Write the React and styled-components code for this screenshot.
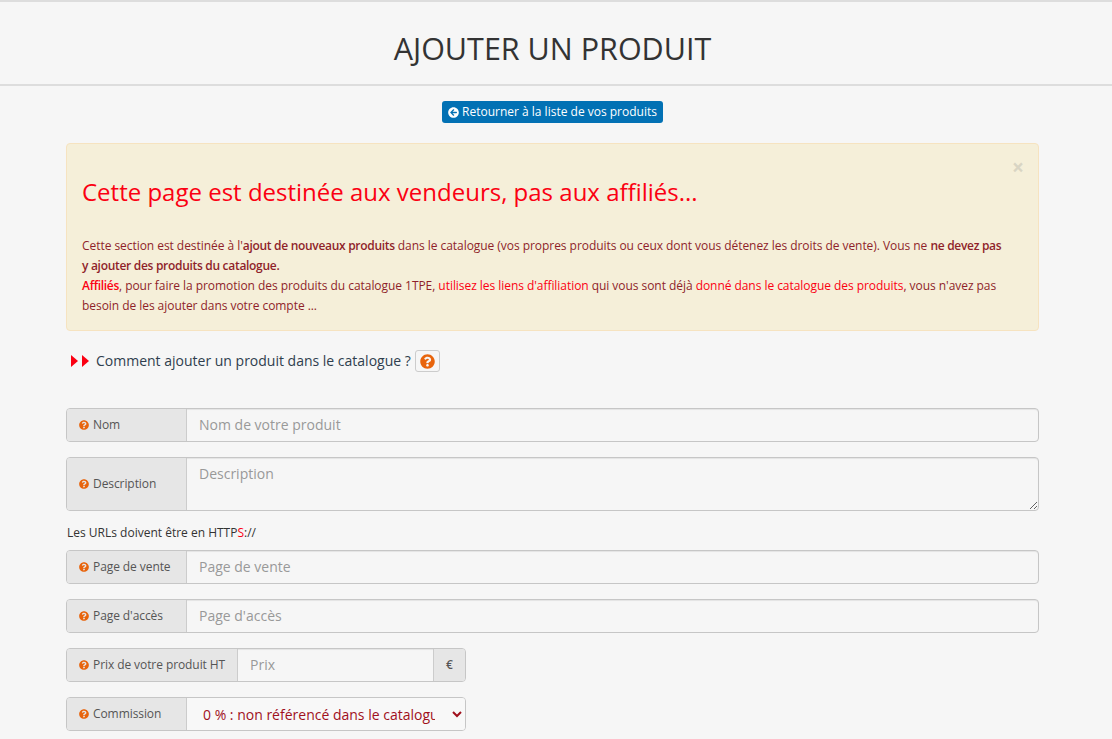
import React from 'react'
import styled, { createGlobalStyle } from 'styled-components'
import { FaQuestionCircle, FaArrowCircleLeft } from 'react-icons/fa'

const GlobalStyle = createGlobalStyle`
  html, body {
    margin: 0;
    padding: 0;
    background: #f6f6f6;
  }
  body {
    font-family: "Open Sans", "Liberation Sans", sans-serif;
    font-size: 12px;
    line-height: 20px;
    color: #333;
  }
  * {
    box-sizing: border-box;
  }
`

const App = () => {
  return (
    <>
      <GlobalStyle />
      <PageHeader>
        <PageTitle>AJOUTER UN PRODUIT</PageTitle>
      </PageHeader>
      <BackRow>
        <BackButton>
          <FaArrowCircleLeft size={11} />
          Retourner à la liste de vos produits
        </BackButton>
      </BackRow>
      <Content>
        <Alert>
          <CloseButton>×</CloseButton>
          <AlertTitle>Cette page est destinée aux vendeurs, pas aux affiliés...</AlertTitle>
          <AlertText>
            Cette section est destinée à l'<Strong>ajout de nouveaux produits</Strong> dans le catalogue
            (vos propres produits ou ceux dont vous détenez les droits de vente). Vous ne{' '}
            <Strong>ne devez pas y ajouter des produits du catalogue.</Strong>
            <br />
            <Red><Strong>Affiliés</Strong></Red>, pour faire la promotion des produits du catalogue 1TPE,{' '}
            <Red>utilisez les liens d'affiliation</Red> qui vous sont déjà{' '}
            <Red>donné dans le catalogue des produits</Red>, vous n'avez pas besoin de les
            ajouter dans votre compte ...
          </AlertText>
        </Alert>

        <HowTo>
          <Triangles>
            <Triangle />
            <Triangle />
          </Triangles>
          Comment ajouter un produit dans le catalogue ?
          <HelpButton>
            <FaQuestionCircle size={15} />
          </HelpButton>
        </HowTo>

        <Form>
          <Group>
            <Addon>
              <FaQuestionCircle size={10} />
              Nom
            </Addon>
            <Input placeholder="Nom de votre produit" />
          </Group>
          <Group>
            <Addon>
              <FaQuestionCircle size={10} />
              Description
            </Addon>
            <TextArea placeholder="Description" />
          </Group>
          <UrlNote>
            Les URLs doivent être en HTTP<Red>S</Red>://
          </UrlNote>
          <Group>
            <Addon>
              <FaQuestionCircle size={10} />
              Page de vente
            </Addon>
            <Input placeholder="Page de vente" />
          </Group>
          <Group>
            <Addon>
              <FaQuestionCircle size={10} />
              Page d'accès
            </Addon>
            <Input placeholder="Page d'accès" />
          </Group>
          <Group $narrow>
            <Addon $auto>
              <FaQuestionCircle size={10} />
              Prix de votre produit HT
            </Addon>
            <Input placeholder="Prix" />
            <EndAddon>€</EndAddon>
          </Group>
          <Group $narrow>
            <Addon>
              <FaQuestionCircle size={10} />
              Commission
            </Addon>
            <Select defaultValue="0">
              <option value="0">0 % : non référencé dans le catalogue</option>
            </Select>
          </Group>
        </Form>
      </Content>
    </>
  )
}

const PageHeader = styled.header`
  height: 86px;
  padding: 10px 7px 0 0;
  border-top: 2px solid #ddd;
  border-bottom: 2px solid #ddd;
  display: flex;
  align-items: center;
  justify-content: center;
`
const PageTitle = styled.h1`
  margin: 0;
  font-size: 30.5px;
  line-height: 40px;
  font-weight: 400;
  color: #333;
`
const BackRow = styled.div`
  display: flex;
  justify-content: center;
  padding: 15px 7px 0 0;
`
const BackButton = styled.a`
  display: flex;
  align-items: center;
  gap: 3px;
  height: 22px;
  padding: 0 6px;
  background: #0271b4;
  border-radius: 3px;
  color: #fff;
  font-size: 12px;
  font-weight: 500;
`
const Content = styled.main`
  width: 973px;
  margin: 20px 0 0 66px;
`
const Alert = styled.div`
  position: relative;
  height: 188px;
  padding: 30px 16px 0 15px;
  background: #f5efd9;
  border: 1px solid #f6e3c0;
  border-radius: 4px;
  color: #8f1f2a;
`
const CloseButton = styled.span`
  position: absolute;
  top: 13px;
  right: 14px;
  font-size: 21px;
  font-weight: 700;
  line-height: 21px;
  color: #d9d5c4;
`
const AlertTitle = styled.h2`
  margin: 0 0 26px;
  font-size: 24px;
  line-height: 36px;
  font-weight: 400;
  color: #fb0012;
`
const AlertText = styled.p`
  margin: 0;
  padding-right: 15px;
  font-size: 12px;
  line-height: 20px;
  letter-spacing: -0.05px;
`
const Strong = styled.span`
  font-weight: 600;
  letter-spacing: -0.3px;
`
const Red = styled.span`
  color: #fb0012;
`
const HowTo = styled.div`
  display: flex;
  align-items: center;
  height: 24px;
  margin-top: 18px;
  padding-left: 5px;
  font-size: 14px;
  color: #2f3e4e;
`
const Triangles = styled.span`
  display: flex;
  gap: 4px;
  margin-right: 7px;
`
const Triangle = styled.i`
  width: 0;
  height: 0;
  border-left: 7px solid #fb0012;
  border-top: 6px solid transparent;
  border-bottom: 6px solid transparent;
`
const HelpButton = styled.span`
  display: flex;
  align-items: center;
  justify-content: center;
  width: 25px;
  height: 22px;
  margin-left: 4px;
  border: 1px solid #ccc;
  border-radius: 3px;
  color: #e8640c;
`
const Form = styled.form`
  display: flex;
  flex-direction: column;
  gap: 15px;
  margin-top: 35px;
`
const Group = styled.div`
  display: flex;
  align-items: stretch;
  width: ${(props) => (props.$narrow ? '400px' : '100%')};
  min-height: 34px;
  border: 1px solid #c6c6c6;
  border-radius: 4px;
  box-shadow: inset 0 1px 1px rgba(0, 0, 0, 0.075);
`
const Addon = styled.label`
  flex: 0 0 ${(props) => (props.$auto ? '171px' : '120px')};
  display: flex;
  align-items: center;
  gap: 4px;
  padding-left: 12px;
  background: #e6e6e6;
  border-right: 1px solid #ccc;
  border-radius: 3px 0 0 3px;
  font-size: 12px;
  letter-spacing: -0.08px;
  color: #555;

  svg {
    color: #e8640c;
    flex: none;
  }
`
const EndAddon = styled.span`
  flex: 0 0 32px;
  display: flex;
  align-items: center;
  justify-content: center;
  background: #e6e6e6;
  border-left: 1px solid #ccc;
  border-radius: 0 3px 3px 0;
  font-size: 12px;
  font-weight: 600;
  color: #555;
`
const Input = styled.input`
  flex: 1;
  min-width: 0;
  height: 32px;
  padding: 0 12px 1px;
  border: 0;
  background: transparent;
  font-family: inherit;
  font-size: 14px;
  color: #555;

  &::placeholder {
    color: #999;
    opacity: 1;
  }
`
const TextArea = styled.textarea`
  flex: 1;
  height: 52px;
  padding: 6px 12px;
  border: 0;
  background: transparent;
  font-family: inherit;
  font-size: 14px;
  line-height: 20px;
  color: #555;

  &::placeholder {
    color: #999;
    opacity: 1;
  }
`
const UrlNote = styled.div`
  margin: -1px 0 -5px;
  padding-left: 1px;
  font-size: 12px;
  line-height: 15px;
  color: #333;
`
const Select = styled.select`
  flex: 1;
  min-width: 0;
  height: 32px;
  padding: 0 14px 0 12px;
  border: 0;
  background: #f8f8f8;
  border-radius: 0 3px 3px 0;
  font-family: inherit;
  font-size: 14px;
  color: #a0101c;
`

export default App
